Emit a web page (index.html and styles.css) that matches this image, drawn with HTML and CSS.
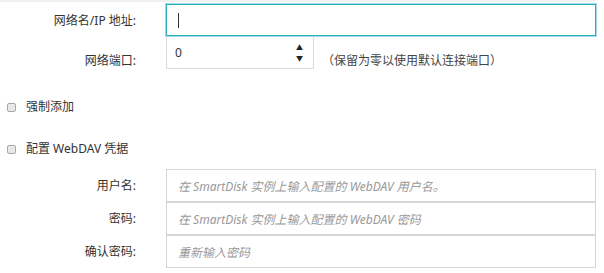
FILE: index.html
```html
<!DOCTYPE html>
<html lang="zh-CN">
  <head>
    <meta charset="UTF-8" />
    <meta name="viewport" content="width=device-width, initial-scale=1" />
    <title>添加 SmartDisk</title>
    <link rel="stylesheet" href="styles.css">
  </head>
  <body>
    <div class="panel">
      <div class="row row-host">
        <label class="label">网络名/IP 地址:</label>
        <div class="field field-focus"><span class="caret"></span></div>
      </div>
      <div class="row row-port">
        <label class="label">网络端口:</label>
        <div class="spin-box">
          <span class="spin-value">0</span>
          <span class="spin-arrows">
            <span class="arrow">&#9650;</span>
            <span class="arrow">&#9660;</span>
          </span>
        </div>
        <span class="hint">（保留为零以使用默认连接端口）</span>
      </div>

      <div class="check check-force">
        <span class="box"></span>
        <span>强制添加</span>
      </div>
      <div class="check check-dav">
        <span class="box"></span>
        <span>配置 WebDAV 凭据</span>
      </div>

      <div class="creds">
        <label class="label">用户名:</label>
        <div class="field"><span class="placeholder">在 SmartDisk 实例上输入配置的 WebDAV 用户名。</span></div>
        <label class="label">密码:</label>
        <div class="field"><span class="placeholder">在 SmartDisk 实例上输入配置的 WebDAV 密码</span></div>
        <label class="label">确认密码:</label>
        <div class="field"><span class="placeholder">重新输入密码</span></div>
      </div>
    </div>
  </body>
</html>
```

FILE: styles.css
```css
body {
  margin: 0;
  background: #fff;
  font-family: "Noto Sans", "Noto Sans CJK SC", sans-serif;
  font-size: 12px;
  color: #333;
}
.panel {
  border-top: 2px solid #f0f0f0;
  padding-top: 2px;
  width: 596px;
}
.row {
  display: grid;
  grid-template-columns: 136px 430px;
  column-gap: 30px;
}
.label {
  text-align: right;
  line-height: 16px;
  white-space: nowrap;
}
.row-host {
  height: 32px;
  align-items: center;
}
.row-host .label {
  padding-top: 1px;
}
.row-port {
  grid-template-columns: 136px 148px auto;
  column-gap: 30px;
  align-items: end;
  height: 33px;
}
.row-port .hint {
  margin-left: -22px;
  color: #444;
  line-height: 16px;
  white-space: nowrap;
}
.field {
  box-sizing: border-box;
  height: 33px;
  border: 1px solid #d6d6d6;
  display: flex;
  align-items: center;
  padding: 0 11px;
  background: #fff;
}
.field-focus {
  height: 32px;
  border-color: #2bafbe;
  box-shadow: 0 0 0 1px rgba(43, 175, 190, 0.45);
}
.caret {
  width: 1px;
  height: 15px;
  background: #333;
}
.spin-box {
  box-sizing: border-box;
  height: 33px;
  border: 1px solid #dcdcdc;
  border-top: none;
  display: flex;
  align-items: center;
  padding: 0 10px 0 8px;
}
.spin-value {
  flex: 1;
  color: #333;
}
.spin-arrows {
  display: flex;
  flex-direction: column;
  font-size: 7px;
  line-height: 11px;
  color: #222;
  margin-top: 1px;
}
.check {
  display: flex;
  align-items: center;
  gap: 10px;
  padding-left: 7px;
  height: 18px;
  line-height: 18px;
}
.check-force {
  margin-top: 29px;
}
.check-dav {
  margin-top: 24px;
}
.box {
  box-sizing: border-box;
  width: 9px;
  height: 9px;
  border: 1px solid #a8a8a8;
  border-radius: 2px;
  background: #e8e8e8;
}
.creds {
  margin-top: 11px;
  display: grid;
  grid-template-columns: 136px 430px;
  grid-auto-rows: 33px;
  column-gap: 30px;
  align-items: center;
}
.creds .label {
  padding-top: 1px;
}
.placeholder {
  color: #999;
  font-style: italic;
  white-space: nowrap;
}
```
